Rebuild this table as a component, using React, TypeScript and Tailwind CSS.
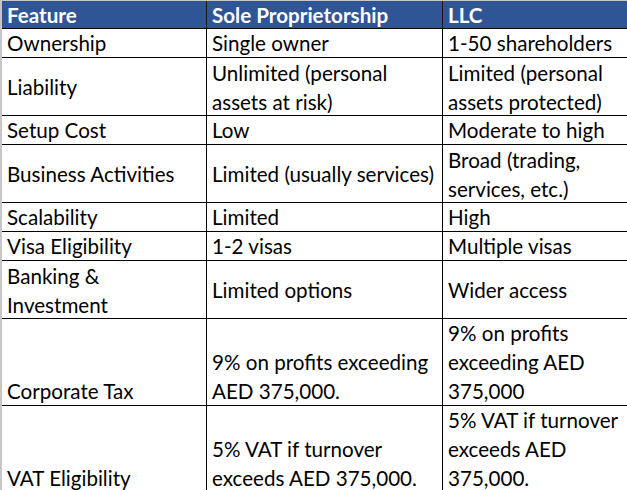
type Row = {
  h: string;
  v: "end" | "center";
  cells: string[][];
};

const rows: Row[] = [
  { h: "h-[29px]", v: "end", cells: [["Ownership"], ["Single owner"], ["1-50 shareholders"]] },
  {
    h: "h-[58px]",
    v: "center",
    cells: [["Liability"], ["Unlimited (personal", "assets at risk)"], ["Limited (personal", "assets protected)"]],
  },
  { h: "h-[29px]", v: "end", cells: [["Setup Cost"], ["Low"], ["Moderate to high"]] },
  {
    h: "h-[58px]",
    v: "center",
    cells: [["Business Activities"], ["Limited (usually services)"], ["Broad (trading,", "services, etc.)"]],
  },
  { h: "h-[29px]", v: "end", cells: [["Scalability"], ["Limited"], ["High"]] },
  { h: "h-[29px]", v: "end", cells: [["Visa Eligibility"], ["1-2 visas"], ["Multiple visas"]] },
  {
    h: "h-[58px]",
    v: "center",
    cells: [["Banking &", "Investment"], ["Limited options"], ["Wider access"]],
  },
  {
    h: "h-[87px]",
    v: "end",
    cells: [["Corporate Tax"], ["9% on profits exceeding", "AED 375,000."], ["9% on profits", "exceeding AED", "375,000"]],
  },
  {
    h: "h-[87px]",
    v: "end",
    cells: [["VAT Eligibility"], ["5% VAT if turnover", "exceeds AED 375,000."], ["5% VAT if turnover", "exceeds AED", "375,000."]],
  },
];

const widths = ["w-[205px]", "w-[236px]", "flex-1"];

export default function App() {
  return (
    <div
      className="h-[490px] w-[627px] overflow-hidden bg-white text-[20.6px] text-black"
      style={{ fontFamily: "Lato, 'Noto Sans', sans-serif" }}
    >
      <div className="border-t border-l-2 border-[#c6c6c6]">
        <div className="flex h-[28px] border-b border-black bg-[#2f5597] font-bold text-white">
          {["Feature", "Sole Proprietorship", "LLC"].map((t, i) => (
            <div
              key={t}
              className={`${widths[i]} flex items-end pl-[5px] leading-[28px] ${i < 2 ? "border-r border-[#1a1a1a]" : ""}`}
            >
              <span className="translate-y-[1px]">{t}</span>
            </div>
          ))}
        </div>
        {rows.map((r, ri) => (
          <div key={ri} className={`flex ${r.h} border-b border-black`}>
            {r.cells.map((lines, i) => (
              <div
                key={i}
                className={`${widths[i]} flex flex-col ${r.v === "end" ? "justify-end" : "justify-center"} pl-[5px] leading-[29px] ${i < 2 ? "border-r border-black" : ""}`}
              >
                {lines.map((l) => (
                  <span key={l} className="translate-y-[1px] whitespace-nowrap">
                    {l}
                  </span>
                ))}
              </div>
            ))}
          </div>
        ))}
      </div>
    </div>
  );
}
